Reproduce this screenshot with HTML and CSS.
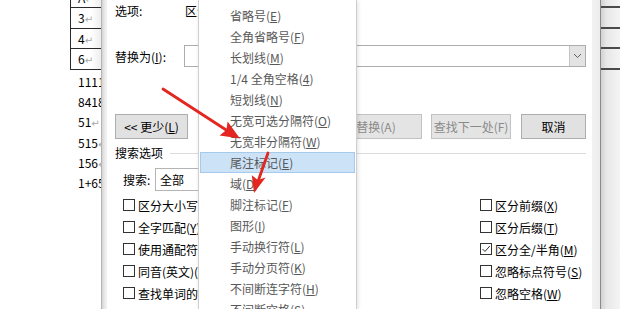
FILE: index.html
```html
<!DOCTYPE html>
<html lang="zh-CN">
<head>
    <meta charset="UTF-8">
    <title>查找和替换</title>
    <link rel="stylesheet" href="styles.css">
</head>
<body>
    <div class="page">
        <!-- 左侧文档 -->
        <div class="doc-left">
            <div class="cells">
                <div class="cell">A<span class="pm">↵</span></div>
                <div class="cell">3<span class="pm">↵</span></div>
                <div class="cell">4<span class="pm">↵</span></div>
                <div class="cell">6<span class="pm">↵</span></div>
            </div>
            <p class="line">1111</p>
            <p class="line">8418</p>
            <p class="line">51<span class="pm">↵</span></p>
            <p class="line">515<span class="pm">↵</span></p>
            <p class="line">156<span class="pm">↵</span></p>
            <p class="line">1+65</p>
        </div>

        <!-- 查找和替换对话框 -->
        <div class="dialog">
            <div class="dialog-body">
                <div class="row row-options">
                    <span class="label">选项:</span>
                    <span>区分全/半角</span>
                </div>

                <div class="row row-replace">
                    <span class="label">替换为(<u>I</u>):</span>
                    <div class="combo">
                        <div class="combo-field"></div>
                        <div class="combo-btn">
                            <svg width="9" height="6" viewBox="0 0 9 6"><path d="M1 1 L4.5 4.5 L8 1" fill="none" stroke="#606060" stroke-width="1"/></svg>
                        </div>
                    </div>
                </div>

                <div class="row row-buttons">
                    <button class="btn btn-less">&lt;&lt; 更少(<u>L</u>)</button>
                    <div class="btn-group">
                        <button class="btn btn-all" disabled>全部替换(A)</button>
                        <button class="btn btn-next" disabled>查找下一处(F)</button>
                        <button class="btn btn-cancel">取消</button>
                    </div>
                </div>

                <div class="group-title">
                    <span>搜索选项</span>
                    <div class="group-line"></div>
                </div>

                <div class="row row-search">
                    <span class="search-label">搜索:</span>
                    <div class="select">全部</div>
                </div>

                <div class="checks">
                    <div class="check"><span class="cb"></span>区分大小写(<u>H</u>)</div>
                    <div class="check"><span class="cb"></span>区分前缀(<u>X</u>)</div>
                    <div class="check"><span class="cb"></span>全字匹配(<u>Y</u>)</div>
                    <div class="check"><span class="cb"></span>区分后缀(<u>T</u>)</div>
                    <div class="check"><span class="cb"></span>使用通配符(<u>U</u>)</div>
                    <div class="check"><span class="cb checked"><svg width="10" height="10" viewBox="0 0 10 10"><path d="M1.5 5 L4 7.5 L8.8 2" fill="none" stroke="#333" stroke-width="1"/></svg></span>区分全/半角(<u>M</u>)</div>
                    <div class="check"><span class="cb"></span>同音(英文)(<u>K</u>)</div>
                    <div class="check"><span class="cb"></span>忽略标点符号(<u>S</u>)</div>
                    <div class="check"><span class="cb"></span>查找单词的所有形式(英文)(<u>W</u>)</div>
                    <div class="check"><span class="cb"></span>忽略空格(<u>W</u>)</div>
                </div>
            </div>
        </div>

        <!-- 右侧文档 -->
        <div class="doc-right">
            <div class="rcell"></div>
            <div class="rcell"></div>
            <div class="rcell"></div>
            <div class="rcell"></div>
        </div>

        <!-- 特殊格式菜单 -->
        <div class="menu">
            <div class="menu-item">省略号(<u>E</u>)</div>
            <div class="menu-item">全角省略号(<u>F</u>)</div>
            <div class="menu-item">长划线(<u>M</u>)</div>
            <div class="menu-item">1/4 全角空格(<u>4</u>)</div>
            <div class="menu-item">短划线(<u>N</u>)</div>
            <div class="menu-item">无宽可选分隔符(<u>O</u>)</div>
            <div class="menu-item">无宽非分隔符(<u>W</u>)</div>
            <div class="menu-item active">尾注标记(<u>E</u>)</div>
            <div class="menu-item">域(<u>D</u>)</div>
            <div class="menu-item">脚注标记(<u>F</u>)</div>
            <div class="menu-item">图形(<u>I</u>)</div>
            <div class="menu-item">手动换行符(<u>L</u>)</div>
            <div class="menu-item">手动分页符(<u>K</u>)</div>
            <div class="menu-item">不间断连字符(<u>H</u>)</div>
            <div class="menu-item">不间断空格(<u>S</u>)</div>
        </div>

        <!-- 红色箭头 -->
        <svg class="arrows" width="620" height="309" viewBox="0 0 620 309">
            <line x1="163" y1="89" x2="227" y2="130.5" stroke="#e3261f" stroke-width="2.8" stroke-linecap="round"/>
            <polygon points="240,138.6 219.6,135.6 226.4,130 227.6,121.6" fill="#e3261f"/>
            <line x1="268" y1="153" x2="258.5" y2="180" stroke="#e3261f" stroke-width="2.8" stroke-linecap="round"/>
            <polygon points="254,193 251.8,175.2 257.8,180 265.6,177.6" fill="#e3261f"/>
        </svg>
    </div>
</body>
</html>
```

FILE: styles.css
```css
body {
    margin: 0;
    width: 620px;
    height: 309px;
    overflow: hidden;
    background: #fff;
    color: #000;
    font-family: "Noto Sans CJK SC", "Microsoft YaHei", sans-serif;
    font-size: 12px;
}
.page {
    position: relative;
    display: flex;
    height: 309px;
    overflow: hidden;
}
u {
    text-decoration: underline;
    text-underline-offset: 1px;
}

/* 文档 */
.doc-left {
    flex: none;
    width: 101px;
    padding-left: 70px;
    box-sizing: border-box;
}
.cells {
    margin-top: -12.6px;
    width: 32px;
}
.cell {
    height: 20.65px;
    line-height: 20px;
    padding-left: 7px;
    box-sizing: border-box;
    border: 1px solid #2a2a2a;
    border-top: none;
    border-right: none;
    background: linear-gradient(to right, #fff 65%, #ececec);
}
.cell:first-child {
    border-top: 1px solid #2a2a2a;
}
.pm {
    color: #a8a8a8;
    font-family: "DejaVu Sans", sans-serif;
    font-size: 10px;
}
.line {
    margin: 0;
    height: 20.2px;
    line-height: 20.2px;
    padding-left: 8px;
    white-space: nowrap;
}
.line:first-of-type {
    margin-top: 2px;
}

/* 对话框 */
.dialog {
    flex: none;
    width: 500px;
    display: flex;
    padding: 0 8px 0 5px;
    box-sizing: border-box;
    border-left: 1px solid #b4b4b4;
    border-right: 1px solid #8a8a8a;
    background: linear-gradient(to right, #d4d4d4, #ececec 3px, #f2f2f2 5px, #f2f2f2 calc(100% - 8px), #ececec);
}
.dialog-body {
    flex: 1;
    background: #fff;
    padding: 0 6px 0 8px;
}
.row {
    display: flex;
    align-items: center;
}
.label {
    flex: none;
    width: 69px;
}
.row-options {
    height: 20px;
}
.row-options .label {
    width: 70px;
}
.row-replace {
    margin-top: 25px;
    height: 22px;
}
.combo {
    flex: 1;
    display: flex;
    height: 22px;
    box-sizing: border-box;
    border: 1px solid #adadad;
}
.combo-field {
    flex: 1;
}
.combo-btn {
    width: 15px;
    display: flex;
    align-items: center;
    justify-content: center;
    background: #e3e3e3;
    border-left: 1px solid #c4c4c4;
}
.row-buttons {
    margin-top: 47px;
    height: 25px;
    justify-content: space-between;
}
.btn-group {
    display: flex;
    gap: 9px;
}
.btn {
    height: 25px;
    padding: 0;
    background: #e1e1e1;
    border: 1px solid #adadad;
    font-family: inherit;
    font-size: 12px;
    color: #000;
}
.btn:disabled {
    color: #8a8a8a;
    background: #e4e4e4;
    border-color: #c2c2c2;
}
.btn-less {
    width: 73px;
}
.btn-all {
    width: 116px;
}
.btn-next {
    width: 80px;
}
.btn-cancel {
    width: 65px;
    margin-left: 1px;
}
.group-title {
    display: flex;
    align-items: center;
    margin-top: 7px;
    height: 14px;
    line-height: 14px;
}
.group-line {
    flex: 1;
    height: 1px;
    margin-left: 7px;
    background: #dcdcdc;
}
.row-search {
    margin-top: 8px;
    height: 23px;
    padding-left: 8px;
}
.search-label {
    width: 32px;
}
.select {
    width: 160px;
    height: 23px;
    line-height: 21px;
    padding-left: 4px;
    box-sizing: border-box;
    border: 1px solid #b4b4b4;
}
.checks {
    margin-top: 3px;
    padding-left: 8px;
    display: grid;
    grid-template-columns: 357px 1fr;
    grid-auto-rows: 22px;
}
.check {
    display: flex;
    align-items: center;
    white-space: nowrap;
}
.cb {
    flex: none;
    width: 12px;
    height: 12px;
    margin-right: 3px;
    box-sizing: border-box;
    border: 1px solid #333;
    background: #fff;
    display: flex;
    align-items: center;
    justify-content: center;
}

.doc-right {
    flex: 1;
    background: linear-gradient(to right, #d2d2d2, #e8e8e8 30%, #f4f4f4);
}
.rcell {
    height: 20.65px;
    box-sizing: border-box;
    border-bottom: 2px solid #4a4a4a;
}
.rcell:first-child {
    margin-top: -12.6px;
}

/* 下拉菜单 */
.menu {
    position: absolute;
    left: 198px;
    top: 0;
    bottom: 0;
    width: 159px;
    overflow: hidden;
    box-sizing: border-box;
    padding-top: 5px;
    background: #fff;
    border-left: 1px solid #cfcfcf;
    border-right: 1px solid #cfcfcf;
    box-shadow: 1px 1px 4px rgba(0,0,0,0.12);
}
.menu-item {
    height: 21px;
    line-height: 19px;
    margin: 0 1px;
    padding-left: 29px;
    box-sizing: border-box;
    border: 1px solid transparent;
    color: #585858;
    white-space: nowrap;
}
.menu-item.active {
    background: #cce2f6;
    border-color: #a6caec;
}

.arrows {
    position: absolute;
    left: 0;
    top: 0;
    pointer-events: none;
}
```
